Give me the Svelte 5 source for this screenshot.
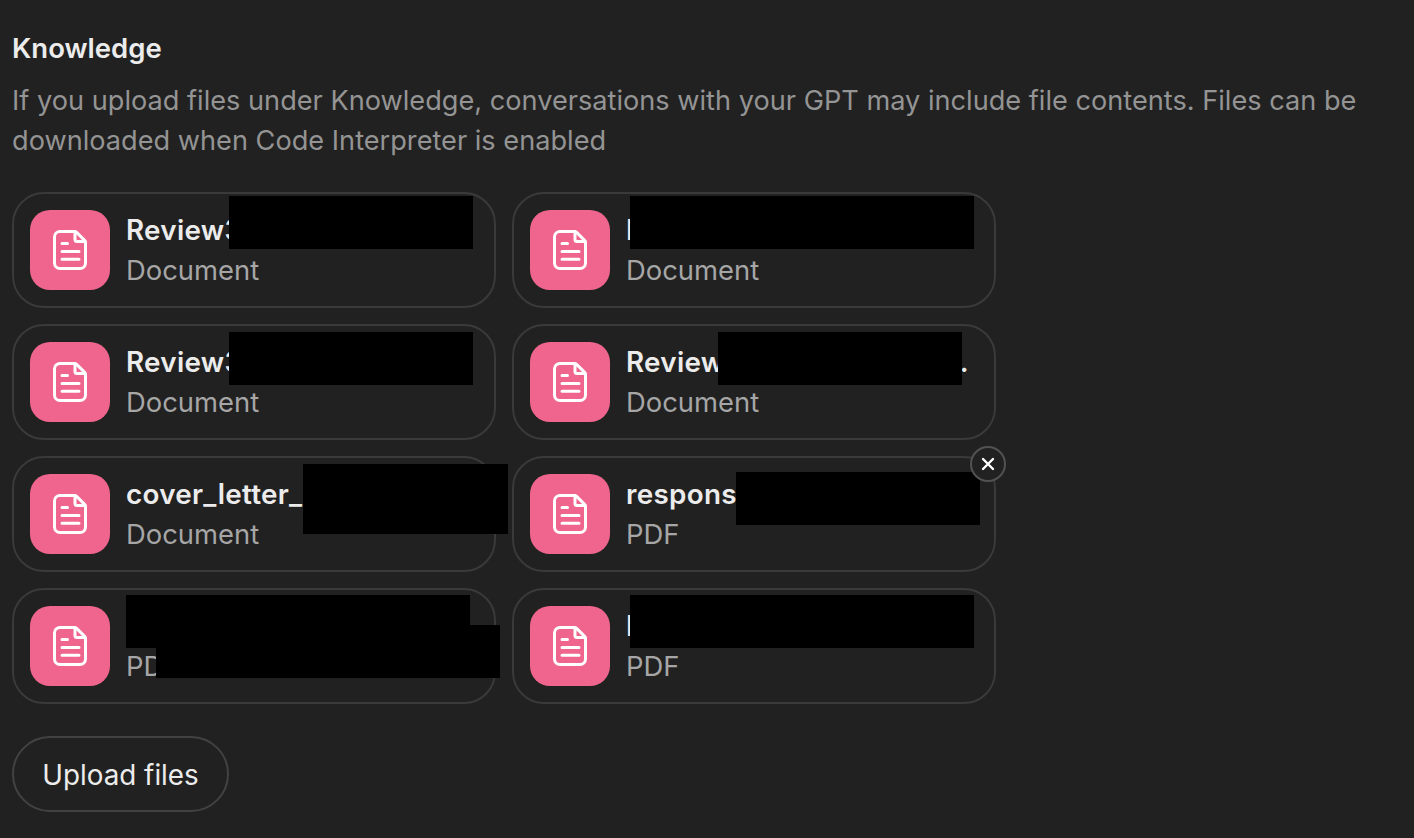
<script>
  // redaction boxes are in page coordinates, the grid starts at (12, 192)
  const files = [
    { name: "Review3", type: "Document", marks: [[229, 196, 244, 53]] },
    { name: "I", type: "Document", marks: [[630, 196, 344, 53]] },
    { name: "Review3", type: "Document", marks: [[229, 332, 244, 53]] },
    { name: "Review3", tail: ".", type: "Document", marks: [[718, 332, 244, 53]] },
    { name: "cover_letter_", type: "Document", marks: [[303, 464, 205, 70]] },
    { name: "response", type: "PDF", close: true, marks: [[736, 472, 244, 53]] },
    { name: "", type: "PDF", marks: [[126, 595, 344, 53], [156, 625, 344, 53]] },
    { name: "I", type: "PDF", marks: [[630, 595, 344, 53]] }
  ];
</script>

<main class="page">
  <h2>Knowledge</h2>
  <p class="hint">
    If you upload files under Knowledge, conversations with your GPT may include file contents. Files can be
    downloaded when Code Interpreter is enabled
  </p>

  <div class="files">
    {#each files as file}
      <div class="card">
        <div class="icon">
          <svg width="40" height="40" viewBox="0 0 40 40" fill="none" stroke="#fff" stroke-width="3" stroke-linecap="round" stroke-linejoin="round">
            <path d="M9.500 1.500h15c.8 0 1.500.3 2.100.9l8 8c.6.6.9 1.300.9 2.100V33a5.500 5.500 0 0 1-5.500 5.500h-20A5.500 5.500 0 0 1 4.500 33V7a5.500 5.500 0 0 1 5-5.500Z" />
            <path d="M25 2v7.500a2 2 0 0 0 2 2h8" />
            <path d="M12 13.500h5.500M12 21.500h17M12 29.300h17" />
          </svg>
        </div>
        <div class="meta">
          <div class="name" class:long={file.tail}>
            <span>{file.name}</span>
            {#if file.tail}<span>{file.tail}</span>{/if}
          </div>
          <div class="type">{file.type}</div>
        </div>
        {#if file.close}
          <button class="close" aria-label="Remove">
            <svg width="14" height="14" viewBox="0 0 14 14" fill="none" stroke="#fff" stroke-width="2.400" stroke-linecap="round">
              <path d="M2 2l10 10M12 2L2 12" />
            </svg>
          </button>
        {/if}
      </div>
    {/each}
    {#each files as file}
      {#each file.marks as m}
        <div class="mark" style="left: {m[0] - 12}px; top: {m[1] - 192}px; width: {m[2]}px; height: {m[3]}px"></div>
      {/each}
    {/each}
  </div>

  <button class="upload">Upload files</button>
</main>

<style>
  :global(body) {
    background: #212121;
  }

  .page {
    height: 838px;
    box-sizing: border-box;
    padding: 32px 12px 0;
    font-family: Inter, "Liberation Sans", sans-serif;
    background: #212121;
    overflow: hidden;
  }

  h2 {
    margin: 0 0 17px;
    font-size: 27.5px;
    line-height: 32px;
    font-weight: 600;
    color: #ececec;
  }

  .hint {
    margin: 0 0 31px;
    font-size: 27.16px;
    line-height: 40px;
    color: #949494;
  }

  .files {
    position: relative;
    display: grid;
    grid-template-columns: 484px 484px;
    gap: 16px;
  }

  .card {
    position: relative;
    display: flex;
    align-items: center;
    gap: 16px;
    height: 116px;
    box-sizing: border-box;
    padding: 0 16px;
    border: 2px solid #3a3a3a;
    border-radius: 32px;
  }

  .icon {
    flex: none;
    display: flex;
    align-items: center;
    justify-content: center;
    width: 80px;
    height: 80px;
    border-radius: 20px;
    background: #ef658d;
  }

  .meta {
    min-width: 0;
  }

  .name {
    height: 40px;
    font-size: 27.8px;
    line-height: 40px;
    font-weight: 600;
    letter-spacing: 0.3px;
    color: #ececec;
    white-space: nowrap;
  }

  .name.long {
    display: flex;
    justify-content: space-between;
    width: 343px;
  }

  .type {
    font-size: 27.4px;
    line-height: 40px;
    color: #a6a6a6;
  }

  .close {
    position: absolute;
    top: -12px;
    right: -12px;
    z-index: 2;
    display: flex;
    align-items: center;
    justify-content: center;
    width: 36px;
    height: 36px;
    padding: 0;
    border: 2px solid #525252;
    border-radius: 50%;
    background: #212121;
  }

  .mark {
    position: absolute;
    z-index: 1;
    background: #000;
  }

  .upload {
    display: block;
    margin-top: 32px;
    height: 76px;
    width: 217px;
    padding: 2px 0 0;
    border: 2px solid #424242;
    border-radius: 38px;
    background: transparent;
    color: #ececec;
    font-family: inherit;
    font-size: 27.8px;
    font-weight: 400;
  }
</style>
